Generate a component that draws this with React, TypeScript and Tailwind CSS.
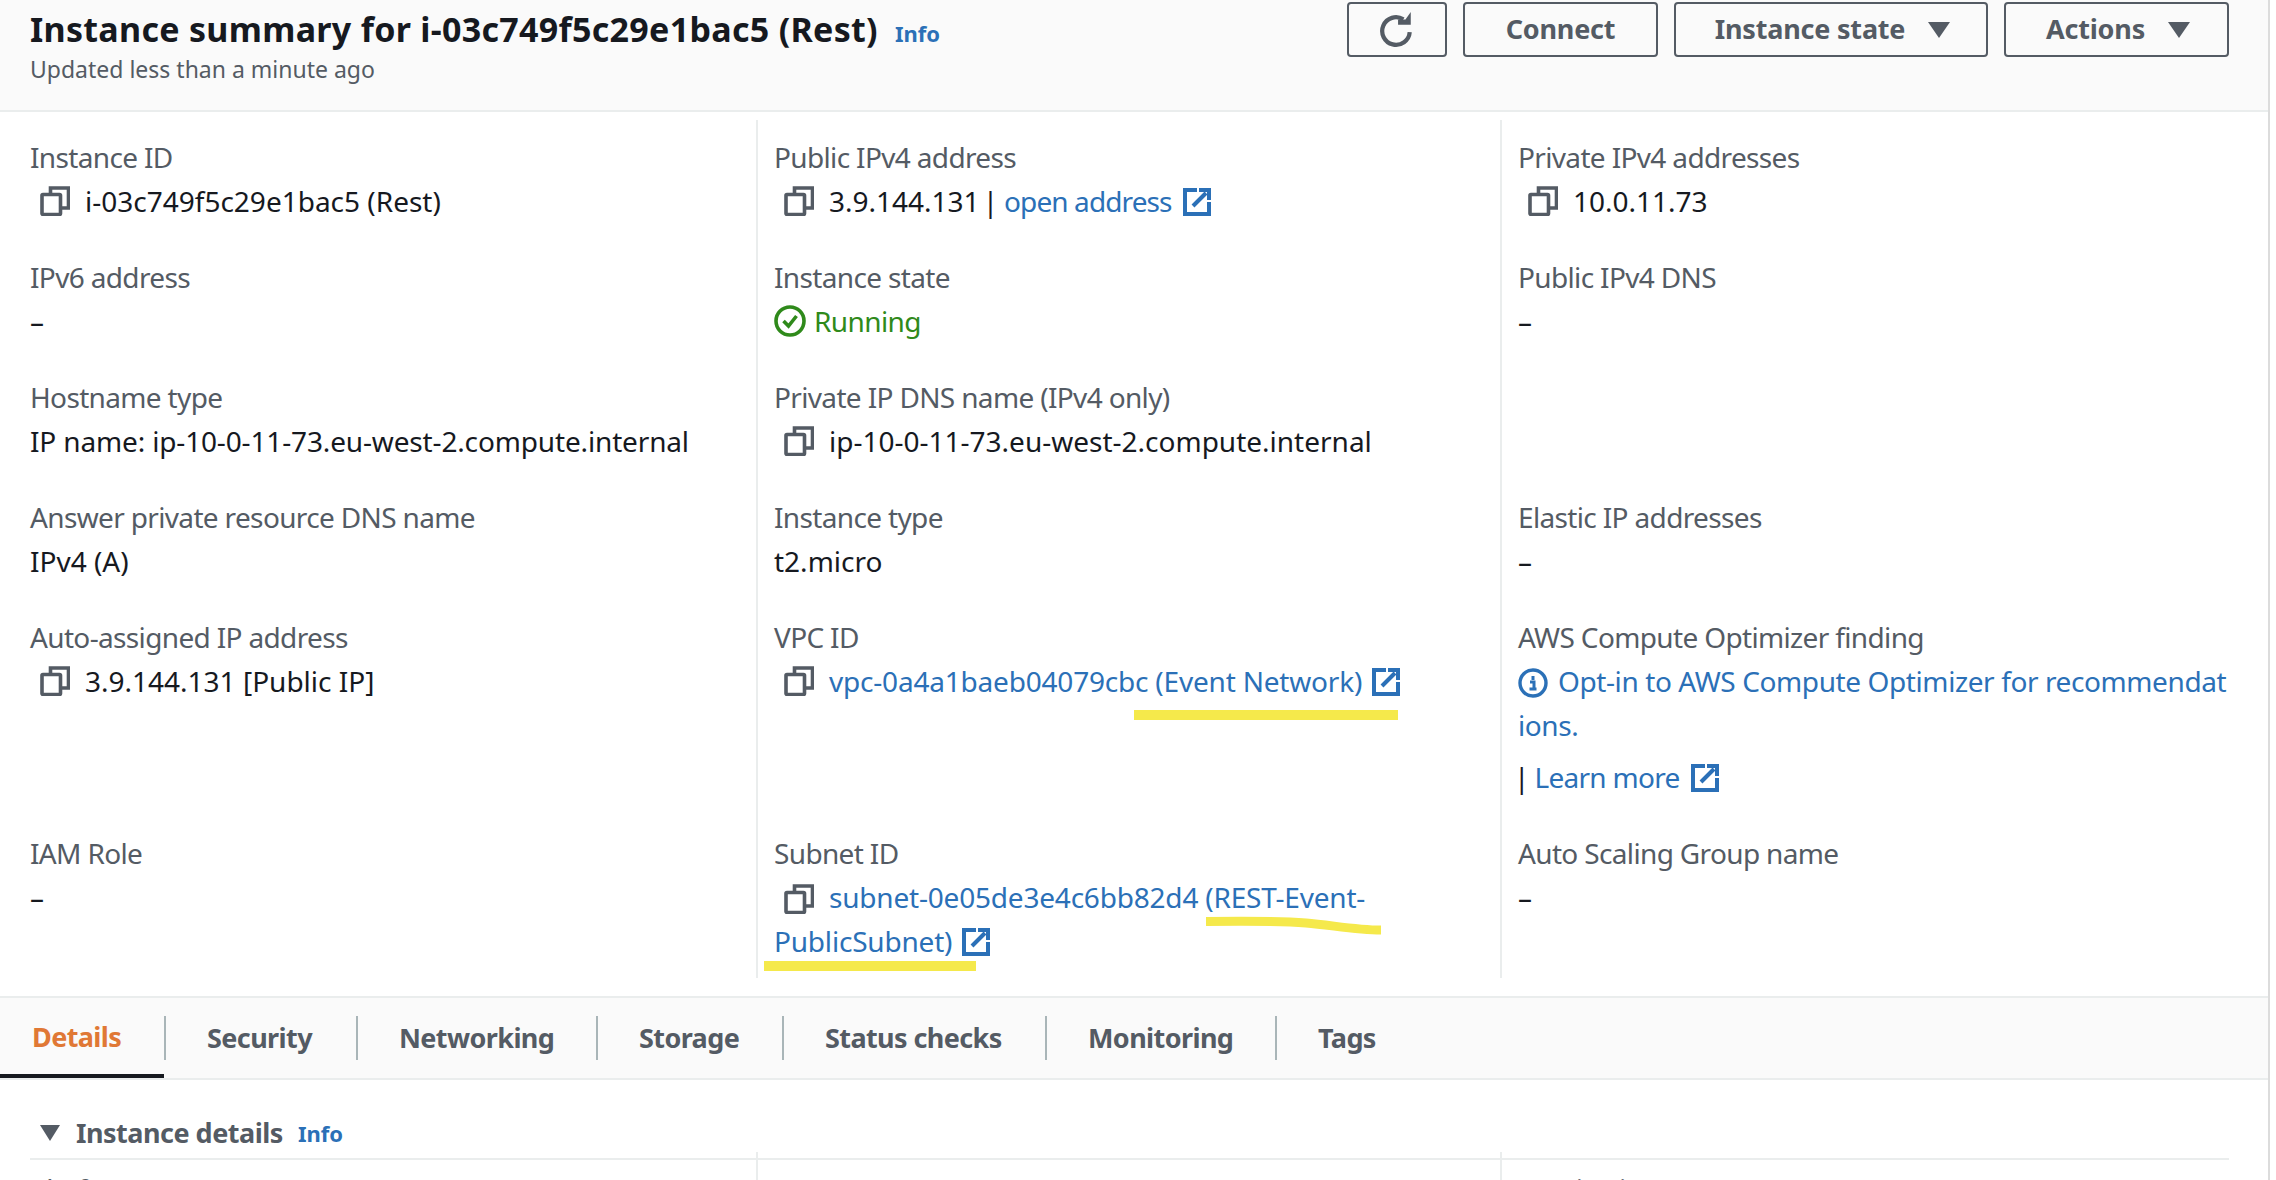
import React from "react";

const Copy = () => (
  <svg width="30" height="30" viewBox="0 0 30 30" className="shrink-0" fill="none" stroke="#545b64" strokeWidth="3.6">
    <rect x="2" y="8.5" width="18.5" height="20" rx="1" />
    <path d="M10.5 8V2h18v20h-8" />
  </svg>
);

const Ext = ({ className }: { className: string }) => (
  <svg width="28" height="28" viewBox="0 0 28 28" className={`inline-block align-[-4px] ${className}`} fill="none" stroke="#2b70b7" strokeWidth="4">
    <path d="M14 2H2v24h24V14" />
    <path d="M10 18L23 5" />
    <path d="M16 0h12v12h-4V4h-8z" fill="#2b70b7" stroke="none" />
  </svg>
);

const Dash = () => <span>–</span>;

function Label({ children }: { children: React.ReactNode }) {
  return <div className="h-[44px] leading-[44px] text-[#545b64] whitespace-nowrap tracking-[-0.65px]">{children}</div>;
}

function CopyValue({ children }: { children: React.ReactNode }) {
  return (
    <div className="h-[44px] leading-[44px] flex items-center whitespace-nowrap">
      <span className="ml-[10px] mr-[15px] flex"><Copy /></span>
      <span>{children}</span>
    </div>
  );
}

const A = ({ children, className }: { children: React.ReactNode; className?: string }) => (
  <span className={`text-[#2b70b7] ${className ?? ""}`}>{children}</span>
);

function Cell({ first, last, children }: { first?: boolean; last?: boolean; children?: React.ReactNode }) {
  const pad = last ? "pb-[15px]" : "pb-[32px]";
  return <div className={first ? `pl-[30px] ${pad}` : `border-l-2 border-[#eaeded] pl-[16px] ${pad}`}>{children}</div>;
}

const tabs = [
  { name: "Security", w: "w-[192px]" },
  { name: "Networking", w: "w-[240px]" },
  { name: "Storage", w: "w-[186px]" },
  { name: "Status checks", w: "w-[263px]" },
  { name: "Monitoring", w: "w-[230px]" },
];

export default function App() {
  return (
    <div className="relative w-[2276px] h-[1180px] overflow-hidden bg-white text-[#16191f] text-[28px] font-['Noto_Sans',sans-serif]">
      <div className="w-[2270px] h-full border-r-2 border-[#dcdcdc]">
        <header className="h-[112px] bg-[#fafafa] border-b-2 border-[#eaeded] flex justify-between pl-[30px] pr-[39px]">
          <div>
            <div className="flex items-baseline h-[59px] leading-[59px]">
              <h1 className="text-[34px] font-bold whitespace-nowrap tracking-[0.3px]">Instance summary for i-03c749f5c29e1bac5 (Rest)</h1>
              <span className="ml-[17px] text-[22px] font-bold text-[#2b70b7]">Info</span>
            </div>
            <div className="text-[23px] leading-[20px] text-[#545b64]">Updated less than a minute ago</div>
          </div>
          <div className="flex gap-[16px] pt-[2px] h-[57px] font-bold text-[27px] tracking-[-0.2px] text-[#545b64]">
            <button className="w-[100px] h-[55px] border-2 border-[#545b64] rounded-[4px] flex items-center justify-center">
              <svg width="36" height="36" viewBox="0 0 34 34" fill="none" stroke="#545b64" strokeWidth="4">
                <path d="M29 19a13 13 0 1 1-6-12" />
                <path d="M18 7h7l5-7v12H18z" fill="#545b64" stroke="none" />
              </svg>
            </button>
            <button className="w-[195px] h-[55px] border-2 border-[#545b64] rounded-[4px] flex items-center justify-center">Connect</button>
            <button className="w-[314px] h-[55px] border-2 border-[#545b64] rounded-[4px] flex items-center justify-center gap-[23px] pl-[3px]">
              Instance state
              <svg width="22" height="16" viewBox="0 0 22 16" fill="#545b64"><path d="M0 0h22L11 16z" /></svg>
            </button>
            <button className="w-[225px] h-[55px] border-2 border-[#545b64] rounded-[4px] flex items-center justify-center gap-[23px] pl-[3px]">
              Actions
              <svg width="22" height="16" viewBox="0 0 22 16" fill="#545b64"><path d="M0 0h22L11 16z" /></svg>
            </button>
          </div>
        </header>

        <div className="h-[8px]" />
        <div className="grid grid-cols-[756px_744px_1fr]">
          <Cell first><div className="h-[15px]" /><Label>Instance ID</Label><CopyValue>i-03c749f5c29e1bac5 (Rest)</CopyValue></Cell>
          <Cell><div className="h-[15px]" /><Label>Public IPv4 address</Label><CopyValue>3.9.144.131<span className="ml-[3px] mr-[6px]">|</span><A className="tracking-[-0.9px]">open address</A><Ext className="ml-[11px]" /></CopyValue></Cell>
          <Cell><div className="h-[15px]" /><Label>Private IPv4 addresses</Label><CopyValue>10.0.11.73</CopyValue></Cell>

          <Cell first><Label>IPv6 address</Label><div className="h-[44px] leading-[44px]"><Dash /></div></Cell>
          <Cell><Label>Instance state</Label>
            <div className="h-[44px] flex items-center gap-[8px] text-[#2f8a1b] tracking-[-0.6px]">
              <svg width="32" height="32" viewBox="0 0 32 32" fill="none" stroke="#2f8a1b" strokeWidth="3.6">
                <circle cx="16" cy="16" r="14" />
                <path d="M9.5 16l5 5 8-10" />
              </svg>
              Running
            </div>
          </Cell>
          <Cell><Label>Public IPv4 DNS</Label><div className="h-[44px] leading-[44px]"><Dash /></div></Cell>

          <Cell first><Label>Hostname type</Label><div className="h-[44px] leading-[44px] whitespace-nowrap tracking-[-0.15px]">IP name: ip-10-0-11-73.eu-west-2.compute.internal</div></Cell>
          <Cell><Label>Private IP DNS name (IPv4 only)</Label><CopyValue>ip-10-0-11-73.eu-west-2.compute.internal</CopyValue></Cell>
          <Cell />

          <Cell first><Label>Answer private resource DNS name</Label><div className="h-[44px] leading-[44px]">IPv4 (A)</div></Cell>
          <Cell><Label>Instance type</Label><div className="h-[44px] leading-[44px]">t2.micro</div></Cell>
          <Cell><Label>Elastic IP addresses</Label><div className="h-[44px] leading-[44px]"><Dash /></div></Cell>

          <Cell first><Label>Auto-assigned IP address</Label><CopyValue>3.9.144.131 [Public IP]</CopyValue></Cell>
          <Cell><Label>VPC ID</Label><CopyValue><A className="tracking-[-0.2px]">vpc-0a4a1baeb04079cbc (Event Network)</A><Ext className="ml-[10px]" /></CopyValue></Cell>
          <Cell>
            <Label>AWS Compute Optimizer finding</Label>
            <div className="leading-[44px] w-[712px] break-all text-[#2b70b7] tracking-[-0.4px]">
              <svg width="30" height="30" viewBox="0 0 30 30" className="inline-block align-[-6px] mr-[10px]" fill="none" stroke="#2b70b7" strokeWidth="3.4">
                <circle cx="15" cy="15" r="13" />
                <path d="M15 8v4M12 14h4v7M11.5 21h7" strokeWidth="3" />
              </svg>
              Opt-in to AWS Compute Optimizer for recommendations.
            </div>
            <div className="mt-[8px] h-[44px] leading-[44px] whitespace-nowrap"><span className="ml-[-4px] mr-[5px]">|</span><A className="tracking-[-0.7px]">Learn more</A><Ext className="ml-[11px]" /></div>
          </Cell>

          <Cell first last><Label>IAM Role</Label><div className="h-[44px] leading-[44px]"><Dash /></div></Cell>
          <Cell last>
            <Label>Subnet ID</Label>
            <div className="leading-[44px] w-[640px] text-[#2b70b7] tracking-[-0.2px]">
              <span className="inline-block align-[-6px] ml-[10px] mr-[15px]"><Copy /></span>
              subnet-0e05de3e4c6bb82d4 (REST-Event-PublicSubnet)<Ext className="ml-[10px]" />
            </div>
          </Cell>
          <Cell last><Label>Auto Scaling Group name</Label><div className="h-[44px] leading-[44px]"><Dash /></div></Cell>
        </div>

        <div className="h-[18px]" />
        <nav className="h-[84px] bg-[#fafafa] border-y-2 border-[#eaeded] flex font-bold text-[27px] tracking-[-0.6px] text-[#545b64]">
          <div className="relative w-[164px] h-full pl-[32px] leading-[78px] text-[#e07835]">
            Details
            <div className="absolute left-0 right-0 bottom-0 h-[4px] bg-[#16191f]" />
          </div>
          {tabs.map((t) => (
            <div key={t.name} className={`${t.w} h-[44px] mt-[18px] border-l-2 border-[#a9b5b8] pl-[41px] leading-[44px] whitespace-nowrap`}>{t.name}</div>
          ))}
          <div className="h-[44px] mt-[18px] border-l-2 border-[#a9b5b8] pl-[41px] leading-[44px]">Tags</div>
        </nav>

        <div className="pl-[30px] pr-[39px]">
          <div className="flex items-center h-[80px] pl-[10px] pt-[30px] pb-[2px] border-b-2 border-[#eaeded] font-bold text-[27px] tracking-[-0.5px] text-[#545b64]">
            <svg width="20" height="16" viewBox="0 0 20 16" fill="#545b64"><path d="M0 0h20L10 16z" /></svg>
            <span className="ml-[16px]">Instance details</span>
            <span className="ml-[15px] text-[22px] tracking-normal text-[#2b70b7]">Info</span>
          </div>
          <div className="flex text-[#545b64] mt-[7px] leading-[44px] tracking-[-0.65px]">
            <div className="w-[744px]">Platform</div>
            <div className="w-[744px]">AMI ID</div>
            <div>Monitoring</div>
          </div>
        </div>
      </div>

      {/* vertical rules of the lower section, hand-drawn yellow marks over the content */}
      <div className="absolute left-[756px] top-[1152px] w-[2px] h-[28px] bg-[#eaeded]" />
      <div className="absolute left-[1500px] top-[1152px] w-[2px] h-[28px] bg-[#eaeded]" />
      <div className="absolute left-[1134px] top-[710px] w-[264px] h-[10px] bg-[#f5e94b]" />
      <svg className="absolute left-[1206px] top-[915px]" width="176" height="20" viewBox="0 0 176 20" fill="none" stroke="#f5e94b" strokeWidth="9">
        <path d="M0 6.5C40 6 75 6 100 8s50 7 75 7" />
      </svg>
      <div className="absolute left-[764px] top-[961px] w-[212px] h-[10px] bg-[#f5e94b]" />
    </div>
  );
}
